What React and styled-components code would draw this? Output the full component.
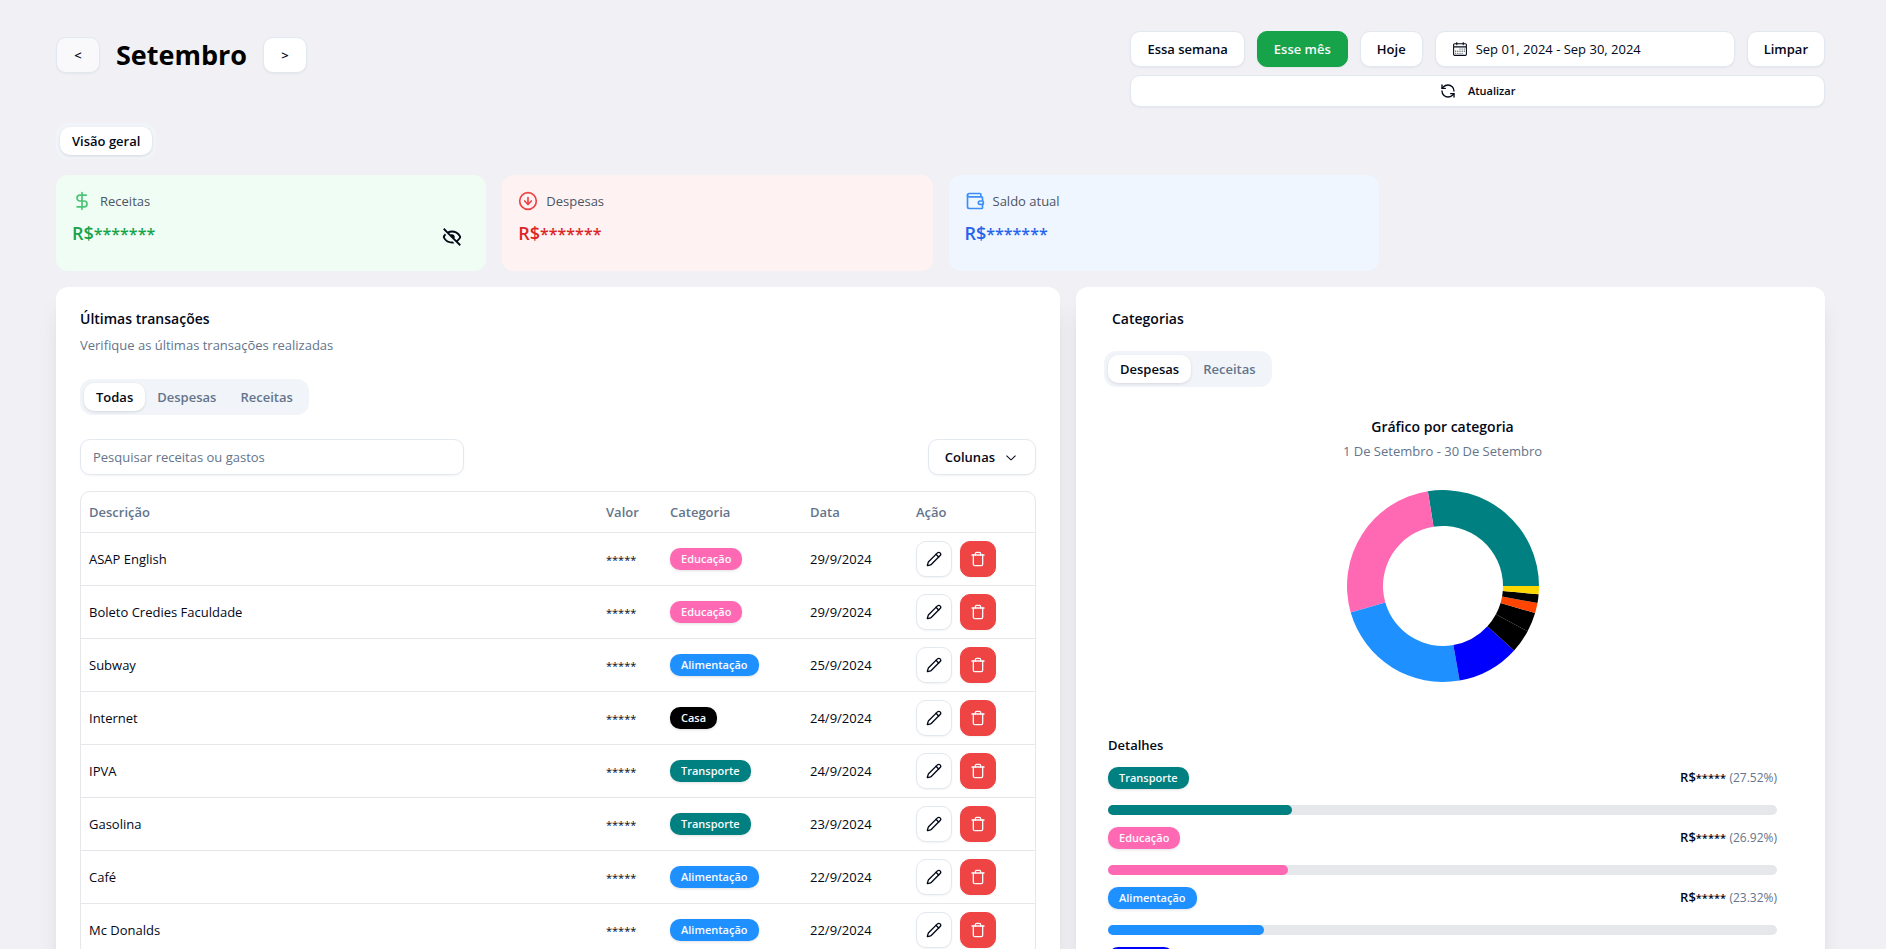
import React, { useState } from 'react';
import styled, { createGlobalStyle, css } from 'styled-components';
import { CircleArrowDown, DollarSign, Pencil, RefreshCcw, Trash, Wallet } from 'lucide-react';
import { BiHide } from 'react-icons/bi';
import { RxCalendar, RxChevronDown } from 'react-icons/rx';

const categoryColors = {
  Transporte: '#008080',
  Educação: '#ff69b4',
  Alimentação: '#1e90ff',
  Moradia: '#0000ff',
  Casa: '#000000',
};

const summary = [
  { label: 'Receitas', Icon: DollarSign, bg: '#f0fdf4', icon: '#4ac475', color: '#16a34a', toggle: true },
  { label: 'Despesas', Icon: CircleArrowDown, bg: '#fef2f2', icon: '#ef4444', color: '#dc2626' },
  { label: 'Saldo atual', Icon: Wallet, bg: '#eff6ff', icon: '#3b8ff6', color: '#2563eb' },
];

const transactions = [
  { name: 'ASAP English', category: 'Educação', date: '29/9/2024' },
  { name: 'Boleto Credies Faculdade', category: 'Educação', date: '29/9/2024' },
  { name: 'Subway', category: 'Alimentação', date: '25/9/2024' },
  { name: 'Internet', category: 'Casa', date: '24/9/2024' },
  { name: 'IPVA', category: 'Transporte', date: '24/9/2024' },
  { name: 'Gasolina', category: 'Transporte', date: '23/9/2024' },
  { name: 'Café', category: 'Alimentação', date: '22/9/2024' },
  { name: 'Mc Donalds', category: 'Alimentação', date: '22/9/2024' },
];

const details = [
  { category: 'Transporte', percent: 27.52 },
  { category: 'Educação', percent: 26.92 },
  { category: 'Alimentação', percent: 23.32 },
  { category: 'Moradia', percent: 10.52 },
];

const slices = [
  { value: 27.52, color: '#008080' },
  { value: 26.92, color: '#ff69b4' },
  { value: 23.32, color: '#1e90ff' },
  { value: 10.52, color: '#0000ff' },
  { value: 3.9, color: '#000000' },
  { value: 3.27, color: '#000000' },
  { value: 1.72, color: '#ff4500' },
  { value: 1.48, color: '#000000' },
  { value: 1.35, color: '#ffd700' },
];

const point = (radius, percent) => {
  const angle = (percent / 100) * 2 * Math.PI;
  return `${96 + radius * Math.cos(angle)} ${96 - radius * Math.sin(angle)}`;
};

// slices run counter-clockwise, starting at three o'clock
const Donut = () => {
  let start = 0;
  return (
    <StDonut viewBox="0 0 192 192" role="img" aria-label="Gráfico por categoria">
      {slices.map((slice, i) => {
        const from = start;
        const to = start + slice.value;
        start = to;
        return (
          <path
            key={i}
            fill={slice.color}
            d={`M${point(96, from)} A96 96 0 0 0 ${point(96, to)} L${point(60, to)} A60 60 0 0 1 ${point(60, from)} Z`}
          />
        );
      })}
    </StDonut>
  );
};

const Tabs = ({ items, label }) => {
  const [active, setActive] = useState(items[0]);
  return (
    <StTabs role="tablist" aria-label={label}>
      {items.map((item) => (
        <StTab
          key={item}
          type="button"
          role="tab"
          aria-selected={active === item}
          $active={active === item}
          onClick={() => setActive(item)}
        >
          {item}
        </StTab>
      ))}
    </StTabs>
  );
};

const Header = () => (
  <StHeader>
    <StMonth>
      <StNavButton type="button" aria-label="Mês anterior" $muted>&lt;</StNavButton>
      <StMonthName>Setembro</StMonthName>
      <StNavButton type="button" aria-label="Próximo mês">&gt;</StNavButton>
    </StMonth>
    <StFilters>
      <StFilterRow>
        <StButton type="button">Essa semana</StButton>
        <StButton type="button" $primary>Esse mês</StButton>
        <StButton type="button">Hoje</StButton>
        <StDateButton type="button">
          <RxCalendar size={16} />
          Sep 01, 2024 - Sep 30, 2024
        </StDateButton>
        <StButton type="button">Limpar</StButton>
      </StFilterRow>
      <StRefresh type="button">
        <RefreshCcw size={16} />
        Atualizar
      </StRefresh>
    </StFilters>
  </StHeader>
);

const Transactions = () => (
  <StPanel $span={4}>
    <StPanelTitle>Últimas transações</StPanelTitle>
    <StMuted>Verifique as últimas transações realizadas</StMuted>
    <StTabsRow>
      <Tabs items={['Todas', 'Despesas', 'Receitas']} label="Transações" />
    </StTabsRow>
    <StToolbar>
      <StSearch type="text" aria-label="Pesquisar" placeholder="Pesquisar receitas ou gastos" />
      <StButton type="button">
        Colunas
        <RxChevronDown size={16} />
      </StButton>
    </StToolbar>
    <StTableFrame>
      <StTable>
        <thead>
          <tr>
            <StTh>Descrição</StTh>
            <StTh $width={64}>Valor</StTh>
            <StTh $width={140}>Categoria</StTh>
            <StTh $width={106}>Data</StTh>
            <StTh $width={127}>Ação</StTh>
          </tr>
        </thead>
        <tbody>
          {transactions.map((item) => (
            <tr key={item.name}>
              <StTd>{item.name}</StTd>
              <StTd><StMask>*****</StMask></StTd>
              <StTd>
                <StBadge $color={categoryColors[item.category]}>{item.category}</StBadge>
              </StTd>
              <StTd>{item.date}</StTd>
              <StTd>
                <StActions>
                  <StIconButton type="button" aria-label="Editar">
                    <Pencil size={16} />
                  </StIconButton>
                  <StIconButton type="button" aria-label="Excluir" $danger>
                    <Trash size={16} />
                  </StIconButton>
                </StActions>
              </StTd>
            </tr>
          ))}
        </tbody>
      </StTable>
    </StTableFrame>
  </StPanel>
);

const Categories = () => (
  <StPanel $span={3}>
    <StCategories>
      <StCategoriesTitle>Categorias</StCategoriesTitle>
      <StCategoryTabs>
        <Tabs items={['Despesas', 'Receitas']} label="Categorias" />
      </StCategoryTabs>
      <StChart>
        <StPanelTitle as="h3">Gráfico por categoria</StPanelTitle>
        <StMuted $tight>1 De Setembro - 30 De Setembro</StMuted>
        <Donut />
      </StChart>
      <StDetailsTitle>Detalhes</StDetailsTitle>
      <StDetails>
        {details.map((item) => (
          <li key={item.category}>
            <StDetailRow>
              <StBadge $color={categoryColors[item.category]}>{item.category}</StBadge>
              <StAmount>
                R$<StMask>*****</StMask> <StPercent>({item.percent.toFixed(2)}%)</StPercent>
              </StAmount>
            </StDetailRow>
            <StTrack>
              <StFill $color={categoryColors[item.category]} style={{ width: `${item.percent}%` }} />
            </StTrack>
          </li>
        ))}
      </StDetails>
    </StCategories>
  </StPanel>
);

export default function App() {
  return (
    <StPage>
      <GlobalStyle />
      <Header />
      <Tabs items={['Visão geral']} label="Seções" />
      <StSummary>
        {summary.map(({ label, Icon, bg, icon, color, toggle }) => (
          <StCard key={label} $bg={bg}>
            <StCardLabel $icon={icon}>
              <Icon size={20} />
              {label}
            </StCardLabel>
            <StCardValue $color={color}>
              <span>R$<StMask $large>*******</StMask></span>
              {toggle && (
                <StToggle type="button" aria-label="Mostrar valores">
                  <BiHide size={22} />
                </StToggle>
              )}
            </StCardValue>
          </StCard>
        ))}
      </StSummary>
      <StPanels>
        <Transactions />
        <Categories />
      </StPanels>
    </StPage>
  );
}

const GlobalStyle = createGlobalStyle`
  * {
    box-sizing: border-box;
  }
  body {
    margin: 0;
    background: #f0f0f5;
    color: #020817;
    font-family: 'Segoe UI', 'Open Sans', sans-serif;
    font-size: 13px;
    line-height: 20px;
  }
  h1, h2, h3, p, ul {
    margin: 0;
    padding: 0;
  }
  button, input {
    font: inherit;
    color: inherit;
  }
  button {
    cursor: pointer;
  }
`;

const StPage = styled.main`
  padding: 31px 61px 48px 56px;
`;

const StHeader = styled.header`
  display: flex;
  justify-content: space-between;
  margin-bottom: 16px;
`;

const StMonth = styled.div`
  display: flex;
  align-items: center;
  gap: 16px;
  height: 48px;
`;

const StMonthName = styled.h1`
  color: #000;
  font-size: 27px;
  font-weight: 700;
  line-height: 36px;
`;

const StButton = styled.button`
  display: inline-flex;
  align-items: center;
  justify-content: center;
  gap: 8px;
  height: 36px;
  padding: 0 16px;
  border: 1px solid #e2e8f0;
  border-radius: 10px;
  background: ${props => props.$muted ? '#f9f9fb' : 'white'};
  box-shadow: 0 1px 2px rgba(0, 0, 0, 0.05);
  font-weight: 600;
  white-space: nowrap;
  ${props => props.$primary && css`
    border-color: #16a34a;
    background: #16a34a;
    color: #f8fafc;
  `}
`;

const StNavButton = styled(StButton)`
  width: 44px;
  padding: 0;
`;

const StDateButton = styled(StButton)`
  justify-content: flex-start;
  width: 300px;
  font-weight: 400;
`;

const StRefresh = styled(StButton)`
  gap: 12px;
  height: 32px;
  font-size: 11px;
`;

const StFilters = styled.div`
  display: flex;
  flex-direction: column;
  gap: 8px;
`;

const StFilterRow = styled.div`
  display: flex;
  gap: 12px;
`;

const StTabs = styled.div`
  display: inline-flex;
  height: 36px;
  padding: 4px;
  border-radius: 12px;
  background: #f1f5f9;
`;

const StTab = styled.button`
  padding: 0 12px;
  border: 0;
  border-radius: 10px;
  background: ${props => props.$active ? 'white' : 'transparent'};
  box-shadow: ${props => props.$active ? '0 1px 3px rgba(0, 0, 0, 0.12)' : 'none'};
  color: ${props => props.$active ? '#020817' : '#64748b'};
  font-weight: 600;
`;

const StSummary = styled.section`
  display: grid;
  grid-template-columns: repeat(4, 1fr);
  gap: 16px;
  margin: 16px 0;
`;

const StCard = styled.article`
  height: 96px;
  padding: 16px;
  border-radius: 12px;
  background: ${props => props.$bg};
`;

const StCardLabel = styled.div`
  display: flex;
  align-items: center;
  gap: 8px;
  color: #4b5563;

  svg {
    color: ${props => props.$icon};
  }
`;

const StCardValue = styled.div`
  display: flex;
  align-items: flex-start;
  justify-content: space-between;
  margin-top: 8px;
  color: ${props => props.$color};
  font-size: 18px;
  font-weight: 600;
  line-height: 28px;
`;

const StMask = styled.span`
  font-size: ${props => props.$large ? '16px' : '11px'};
`;

const StToggle = styled.button`
  display: flex;
  padding: 7px 7px 0;
  border: 0;
  background: none;
  color: #020817;
`;

const StPanels = styled.section`
  display: grid;
  grid-template-columns: repeat(7, 1fr);
  gap: 16px;
`;

const StPanel = styled.section`
  grid-column: span ${props => props.$span};
  padding: 24px;
  border-radius: 12px;
  background: white;
  box-shadow: 0 20px 25px -5px rgba(0, 0, 0, 0.1), 0 8px 10px -6px rgba(0, 0, 0, 0.1);
`;

const StPanelTitle = styled.h2`
  font-size: 14px;
  font-weight: 600;
  line-height: 16px;
`;

const StMuted = styled.p`
  margin-top: ${props => props.$tight ? '6px' : '8px'};
  color: #64748b;
`;

const StTabsRow = styled.div`
  display: flex;
  margin-top: 24px;
`;

const StToolbar = styled.div`
  display: flex;
  justify-content: space-between;
  margin: 24px 0 16px;
`;

const StSearch = styled.input`
  width: 384px;
  height: 36px;
  padding: 0 12px;
  border: 1px solid #e2e8f0;
  border-radius: 10px;
  background: transparent;
  box-shadow: 0 1px 2px rgba(0, 0, 0, 0.05);

  &::placeholder {
    color: #64748b;
  }
`;

const StTableFrame = styled.div`
  overflow: hidden;
  border: 1px solid #e5e7eb;
  border-radius: 10px;
`;

const StTable = styled.table`
  width: 100%;
  table-layout: fixed;
  border-spacing: 0;
`;

const StTh = styled.th`
  width: ${props => props.$width ? `${props.$width}px` : 'auto'};
  height: 41px;
  padding: 0 8px;
  border-bottom: 1px solid #e5e7eb;
  color: #64748b;
  font-weight: 600;
  text-align: left;
`;

const StTd = styled.td`
  padding: 8px;
  border-bottom: 1px solid #e5e7eb;

  tr:last-child & {
    border-bottom: 0;
  }
`;

const StBadge = styled.span`
  display: inline-block;
  padding: 3px 11px;
  border-radius: 10px;
  background: ${props => props.$color};
  box-shadow: 0 1px 3px rgba(0, 0, 0, 0.12);
  color: #f8fafc;
  font-size: 11px;
  font-weight: 600;
  line-height: 16px;
`;

const StActions = styled.div`
  display: flex;
  gap: 8px;
`;

const StIconButton = styled(StButton)`
  width: 36px;
  padding: 0;
  ${props => props.$danger && css`
    border-color: #ef4444;
    background: #ef4444;
    color: #f8fafc;
  `}
`;

const StCategories = styled.div`
  padding: 0 24px 0 8px;
`;

const StCategoriesTitle = styled(StPanelTitle)`
  margin-left: 4px;
`;

const StCategoryTabs = styled.div`
  display: flex;
  margin: 24px 0 32px -4px;
`;

const StChart = styled.div`
  display: flex;
  flex-direction: column;
  align-items: center;
`;

const StDonut = styled.svg`
  width: 192px;
  height: 192px;
  margin: 29px 0 53px;
`;

const StDetailsTitle = styled.h3`
  font-size: 13px;
  font-weight: 600;
  line-height: 20px;
`;

const StDetails = styled.ul`
  display: flex;
  flex-direction: column;
  gap: 12px;
  margin-top: 12px;
  list-style: none;
`;

const StDetailRow = styled.div`
  display: flex;
  align-items: flex-start;
  justify-content: space-between;
  height: 38px;
`;

const StAmount = styled.span`
  font-weight: 600;
`;

const StPercent = styled.span`
  color: #64748b;
  font-size: 12px;
  font-weight: 400;
`;

const StTrack = styled.div`
  height: 10px;
  border-radius: 5px;
  background: #e5e7eb;
`;

const StFill = styled.div`
  height: 10px;
  border-radius: 5px;
  background: ${props => props.$color};
`;
